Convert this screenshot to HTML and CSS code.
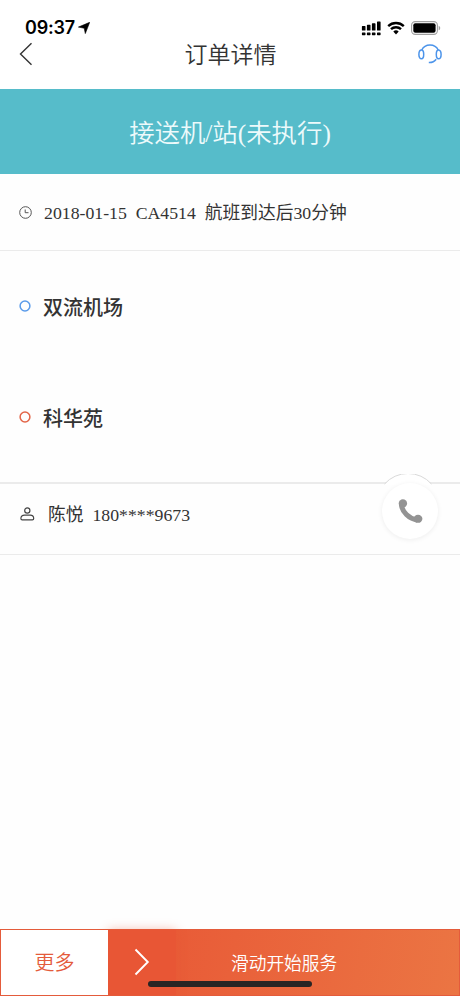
FILE: index.html
```html
<!DOCTYPE html>
<html lang="zh-CN">
<head>
    <meta charset="UTF-8">
    <meta name="viewport" content="width=device-width, initial-scale=1.0">
    <title>订单详情</title>
    <link rel="stylesheet" href="styles.css">
</head>
<body>
    <div class="main">
        <header class="header">
            <div class="status">
                <span class="time">09:37</span>
                <svg class="location" width="12" height="12" viewBox="0 0 12 12"><path d="M11.7 .3L7.3 11.6 6.2 6.2.4 5.1z" fill="#000" stroke="#000" stroke-width=".6" stroke-linejoin="round"/></svg>
                <div class="signals">
                    <svg width="20" height="15" viewBox="0 0 20 15">
                        <path d="M1.500 5.500h2.400v3.500H1.500zM6.500 4.300h2.400V9H6.500zM11.500 2.900h2.400V9h-2.400zM16.600 1.200H19V9h-2.400zM1.500 12.200h2.400v1.400H1.500zM6.500 12.200h2.400v1.400H6.500zM11.500 12.200h2.400v1.400h-2.400zM16.600 12.200H19v1.400h-2.400z" fill="#000" stroke="#000" stroke-width="1.200" stroke-linejoin="round"/>
                    </svg>
                    <svg width="18" height="14" viewBox="0 0 18 14">
                        <path d="M1.2 5.1a11.4 11.4 0 0 1 15.6 0M4 8.2a7.2 7.2 0 0 1 10 0" fill="none" stroke="#000" stroke-width="2.4"/>
                        <path d="M6.3 10.6a4 4 0 0 1 5.4 0L9 13.5z" fill="#000"/>
                    </svg>
                    <svg width="30" height="14" viewBox="0 0 30 14">
                        <rect x=".6" y=".6" width="25.8" height="12.8" rx="3.6" fill="#fff" stroke="#a0a0a0" stroke-width="1.1"/>
                        <rect x="2.3" y="2.2" width="22.3" height="9.6" rx="2" fill="#000"/>
                        <path d="M27.7 4.7c2 .8 2 3.8 0 4.6z" fill="#a0a0a0"/>
                    </svg>
                </div>
            </div>
            <div class="nav">
                <svg class="back" width="14" height="24" viewBox="0 0 14 24"><path d="M12.5 1.2L1.5 12l11 10.8" fill="none" stroke="#333" stroke-width="1.4"/></svg>
                <h1>订单详情</h1>
                <svg class="service" width="24" height="20" viewBox="0 0 24 20">
                    <g fill="none" stroke="#4c94ea" stroke-width="1.500">
                        <path d="M3.800 6C5.300 2.700 8.300.9 12 .9s6.700 1.800 8.200 5.100M18.200 15.200c-1.400 2-3.700 3.400-7.400 3.300"/>
                        <path d="M3.500 6c1.600 0 2.200 1.700 2.200 4.300s-.6 4.500-2.200 4.500S.9 13 .9 10.400 1.900 6 3.500 6zM20.500 6c-1.600 0-2.200 1.700-2.200 4.300s.6 4.500 2.200 4.500 2.600-1.800 2.600-4.400-1-4.400-2.600-4.400z"/>
                    </g>
                </svg>
            </div>
        </header>
        <div class="banner">接送机/站(未执行)</div>
        <div class="row flight">
            <svg width="13" height="13" viewBox="0 0 13 13"><circle cx="6.500" cy="6.500" r="5.800" fill="none" stroke="#555" stroke-width="1"/><path d="M6.200 3.500v3.200h3.300" fill="none" stroke="#555" stroke-width="1"/></svg>
            <p>2018-01-15  CA4514  航班到达后30分钟</p>
        </div>
        <div class="route">
            <div class="stop">
                <svg class="dot" width="12" height="12" viewBox="0 0 12 12"><circle cx="6" cy="6" r="4.900" fill="none" stroke="#5a9bea" stroke-width="1.500"/></svg>
                <p>双流机场</p>
            </div>
            <div class="stop">
                <svg class="dot" width="12" height="12" viewBox="0 0 12 12"><circle cx="6" cy="6" r="4.900" fill="none" stroke="#e36548" stroke-width="1.500"/></svg>
                <p>科华苑</p>
            </div>
        </div>
        <div class="row contact">
            <svg width="15" height="14" viewBox="0 0 15 14"><g fill="none" stroke="#444" stroke-width="1.200"><circle cx="7.300" cy="3.500" r="2.600"/><path d="M4.500 8.200h5.700c2.200 0 3.500 1.200 3.500 3.200 0 .9-.4 1.400-1.300 1.400H2.200c-.9 0-1.300-.5-1.300-1.400 0-2 1.400-3.200 3.600-3.200z"/></g></svg>
            <p>陈悦  180****9673</p>
            <svg class="call-top" width="48" height="11" viewBox="0 0 48 11"><path d="M0 11A31.500 31.500 0 0 1 48 11" fill="#fff"/><path d="M.5 10A31.500 31.500 0 0 1 47.500 10" fill="none" stroke="#d9d9d9"/></svg>
            <div class="call">
                <svg width="26" height="26" viewBox="0 0 26 26">
                    <path d="M4.400 6.500c.6 7.500 7.500 14.200 15.600 15.600" fill="none" stroke="#939393" stroke-width="5"/>
                    <circle cx="5.900" cy="5.400" r="4.200" fill="#939393"/>
                    <ellipse cx="21" cy="20.800" rx="4.400" ry="4" fill="#939393"/>
                </svg>
            </div>
        </div>
        <footer class="footer">
            <div class="more">更多</div>
            <div class="slide">
                <div class="handle"><svg width="16" height="28" viewBox="0 0 16 28"><path d="M1.500 1.500L13.800 14 1.500 26.500" fill="none" stroke="#fff" stroke-width="1.900"/></svg></div>
                <p>滑动开始服务</p>
            </div>
            <div class="home"></div>
        </footer>
    </div>
</body>
</html>
```

FILE: styles.css
```css
*{
    margin: 0px;
    padding: 0px;
    box-sizing: border-box;
}
body{
    font-family: "Liberation Serif", "Noto Sans CJK SC", serif;
    color: #333;
    background-color: #fefefe;
}
svg{
    display: block;
    flex-shrink: 0;
}
.main{
    width: 100%;
    height: 100vh;
    display: flex;
    flex-direction: column;
    overflow: hidden;
}
.header{
    height: 89px;
    padding-top: 17px;
    background-color: #fff;
}
.status{
    height: 22px;
    padding: 0 19px 0 25px;
    display: flex;
    align-items: center;
}
.time{
    width: 49px;
    font: 600 18px/22px Inter, sans-serif;
    letter-spacing: -0.2px;
    color: #000;
}
.location{
    margin-left: 4px;
}
.signals{
    margin-left: auto;
    display: flex;
    align-items: center;
    gap: 6px;
}
.nav{
    height: 30px;
    padding: 0 18px 0 19px;
    display: flex;
    align-items: center;
    justify-content: space-between;
}
.nav h1{
    font-size: 23px;
    font-weight: 350;
    line-height: 30px;
    margin-left: 10px;
    padding-top: 4px;
}
.banner{
    height: 85px;
    padding-top: 2px;
    background-color: #56bcca;
    color: #edfafb;
    font-size: 25.400px;
    font-weight: 350;
    line-height: 85px;
    text-align: center;
}
.row{
    display: flex;
    align-items: center;
    font-size: 17.750px;
    line-height: 24px;
    white-space: pre;
    border-bottom: 1px solid #ebebeb;
}
.row p{
    padding-top: 2px;
}
.flight{
    height: 77px;
    padding-left: 19px;
    gap: 12px;
}
.route{
    height: 233px;
    padding: 41px 0 0 19px;
    border-bottom: 2px solid #ebebeb;
}
.stop{
    height: 111px;
    display: flex;
    gap: 12px;
    font-size: 20px;
    font-weight: 500;
    line-height: 32px;
}
.dot{
    margin-top: 8px;
}
.contact{
    position: relative;
    height: 71px;
    padding: 0 0 10px 20px;
    gap: 13px;
}
.call-top{
    position: absolute;
    right: 28px;
    top: -10px;
}
.call{
    position: absolute;
    right: 22px;
    top: -1px;
    width: 56px;
    height: 56px;
    display: flex;
    align-items: center;
    justify-content: center;
    background-color: #fff;
    border-radius: 50%;
    box-shadow: 0 1px 5px #eee;
}
.footer{
    position: relative;
    height: 67px;
    margin-top: auto;
    display: flex;
    border: 1px solid #e45b3b;
}
.more{
    position: relative;
    z-index: 1;
    width: 107px;
    padding-top: 1px;
    background-color: #fff;
    color: #e45b3b;
    font-size: 20px;
    font-weight: 350;
    line-height: 65px;
    text-align: center;
}
.slide{
    flex: 1;
    display: flex;
    align-items: center;
    background: linear-gradient(100deg, #e85635, #eb7543);
    color: #fff;
    font-size: 17.700px;
    font-weight: 350;
}
.handle{
    width: 68px;
    height: 65px;
    padding: 0 0 2px 26px;
    display: flex;
    align-items: center;
    background-color: #e85635;
    box-shadow: 0 0 10px rgba(232, 86, 53, 0.4);
}
.slide p{
    margin-left: 55px;
    padding-bottom: 2px;
}
.home{
    position: absolute;
    left: 147px;
    bottom: 8px;
    width: 164px;
    height: 6px;
    border-radius: 3px;
    background-color: #292524;
}
```
